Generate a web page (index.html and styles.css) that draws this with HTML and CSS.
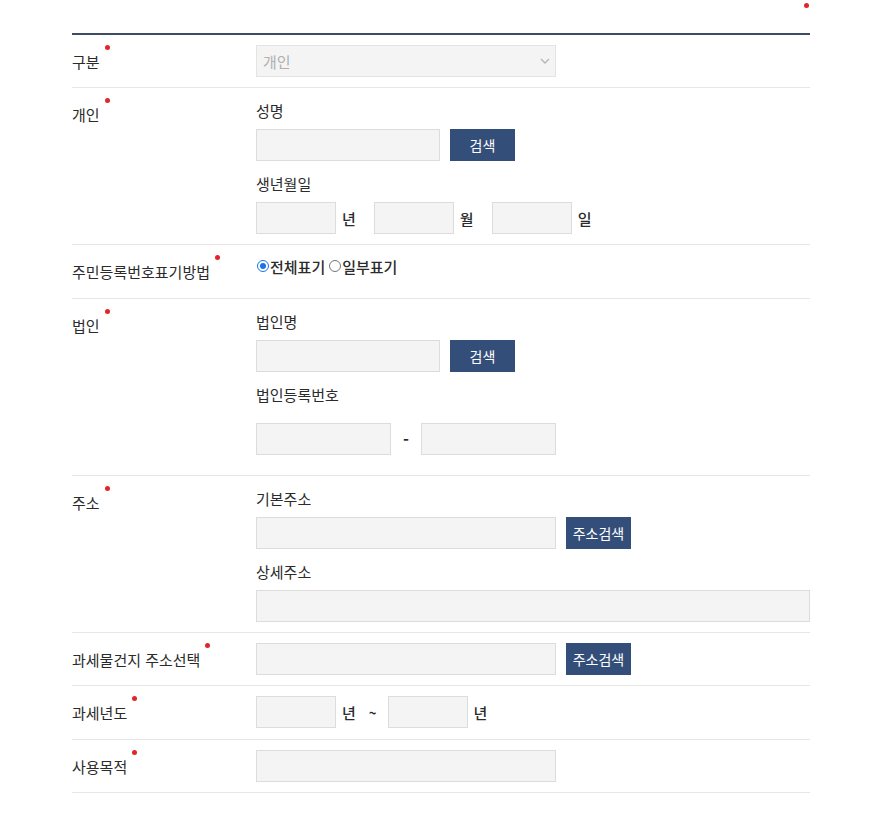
FILE: index.html
```html
<!DOCTYPE html>
<html lang="ko">
<head>
<meta charset="utf-8">
<link rel="stylesheet" href="styles.css">
</head>
<body>
<div class="wrap">
  <div class="req-note"><span class="dot"></span></div>
  <div class="form">
    <div class="row">
      <div class="th"><span class="req">구분</span></div>
      <div class="td">
        <div class="select"><span>개인</span>
          <svg width="10" height="6" viewBox="0 0 10 6"><path d="M1 1l4 4 4-4" fill="none" stroke="#b5b5b5" stroke-width="1.3"/></svg>
        </div>
      </div>
    </div>
    <div class="row">
      <div class="th"><span class="req">개인</span></div>
      <div class="td">
        <div class="sub first">성명</div>
        <div class="line"><span class="input w184"></span><span class="btn">검색</span></div>
        <div class="sub">생년월일</div>
        <div class="line"><span class="input w80"></span><span class="unit">년</span><span class="input w80"></span><span class="unit">월</span><span class="input w80"></span><span class="unit">일</span></div>
      </div>
    </div>
    <div class="row tall">
      <div class="th"><span class="req">주민등록번호표기방법</span></div>
      <div class="td">
        <div class="radios">
          <label class="radio"><span class="rc on"></span>전체표기</label>
          <label class="radio"><span class="rc"></span>일부표기</label>
        </div>
      </div>
    </div>
    <div class="row">
      <div class="th"><span class="req">법인</span></div>
      <div class="td">
        <div class="sub first">법인명</div>
        <div class="line"><span class="input w184"></span><span class="btn">검색</span></div>
        <div class="sub">법인등록번호</div>
        <div class="line reg"><span class="input w135"></span><span class="dash">-</span><span class="input w135"></span></div>
      </div>
    </div>
    <div class="row">
      <div class="th"><span class="req">주소</span></div>
      <div class="td">
        <div class="sub first">기본주소</div>
        <div class="line"><span class="input w300"></span><span class="btn">주소검색</span></div>
        <div class="sub">상세주소</div>
        <div class="line"><span class="input wfull"></span></div>
      </div>
    </div>
    <div class="row">
      <div class="th"><span class="req">과세물건지 주소선택</span></div>
      <div class="td">
        <div class="line"><span class="input w300"></span><span class="btn">주소검색</span></div>
      </div>
    </div>
    <div class="row tall">
      <div class="th"><span class="req">과세년도</span></div>
      <div class="td">
        <div class="line"><span class="input w80"></span><span class="unit year">년</span><span class="tilde">~</span><span class="input w80"></span><span class="unit">년</span></div>
      </div>
    </div>
    <div class="row">
      <div class="th"><span class="req">사용목적</span></div>
      <div class="td">
        <div class="line"><span class="input w300"></span></div>
      </div>
    </div>
  </div>
</div>
</body>
</html>
```

FILE: styles.css
```css
* { box-sizing: border-box; }
html, body { margin: 0; padding: 0; background: #fff; }
body {
  font-family: "Noto Sans CJK KR", "Noto Sans", sans-serif;
  font-size: 15px;
  color: #2b2b2b;
}
.wrap {
  width: 738px;
  margin-left: 72px;
}
.req-note {
  height: 33px;
  display: flex;
  justify-content: flex-end;
  align-items: flex-start;
  padding-top: 3px;
}
.req-note .dot {
  display: block;
  width: 5px;
  height: 5px;
  border-radius: 50%;
  background: #e3242b;
  margin-right: 1px;
}
.form { border-top: 2px solid #3f4b60; }
.row {
  display: flex;
  border-bottom: 1px solid #e6e6e6;
}
.row.tall { min-height: 54px; }
.th {
  width: 184px;
  flex: none;
  padding: 16px 0 14px;
  line-height: 22px;
}
.req { position: relative; }
.req::after {
  content: "";
  position: absolute;
  right: -10px;
  top: -6px;
  width: 5px;
  height: 5px;
  border-radius: 50%;
  background: #e3242b;
}
.td {
  flex: 1;
  padding: 10px 0;
}
.sub {
  line-height: 26px;
  margin-top: 10px;
  margin-bottom: 5px;
}
.sub.first { margin-top: 0; }
.line {
  display: flex;
  align-items: center;
}
.line.reg { margin: 15px 0 10px; }
.input {
  display: block;
  height: 32px;
  background: #f4f4f4;
  border: 1px solid #dcdcdc;
}
.w80 { width: 80px; }
.w135 { width: 135px; }
.w184 { width: 184px; }
.w300 { width: 300px; }
.wfull { width: 554px; }
.select {
  width: 300px;
  height: 32px;
  background: #f4f4f4;
  border: 1px solid #e4e4e4;
  display: flex;
  align-items: center;
  justify-content: space-between;
  padding: 0 5px 0 6px;
  color: #b0b0b0;
}
.btn {
  display: flex;
  align-items: center;
  justify-content: center;
  width: 65px;
  height: 32px;
  margin-left: 10px;
  background: #344e7a;
  color: #fff;
  font-size: 14px;
}
.unit {
  margin: 0 18px 0 6px;
  font-weight: 500;
}
.line .unit:last-child { margin-right: 0; }
.unit.year { margin-right: 0; }
.tilde {
  margin: 0 11px 0 13px;
  font-weight: 700;
  font-size: 13px;
}
.dash {
  margin: 0 12px 0 12px;
  font-weight: 700;
  font-size: 16px;
  width: 6px;
}
.radios {
  display: flex;
  height: 22px;
  margin-top: 0;
}
.radio {
  display: flex;
  align-items: center;
  height: 22px;
  font-weight: 500;
}
.rc {
  width: 12px;
  height: 12px;
  border-radius: 50%;
  border: 1px solid #767676;
  margin: 0 1px 0 1px;
  background: #fff;
  position: relative;
}
.radio + .radio .rc { margin-left: 4px; }
.rc.on { border-color: #1a73e8; }
.rc.on::after {
  content: "";
  position: absolute;
  left: 2px;
  top: 2px;
  width: 6px;
  height: 6px;
  border-radius: 50%;
  background: #1a73e8;
}
```
